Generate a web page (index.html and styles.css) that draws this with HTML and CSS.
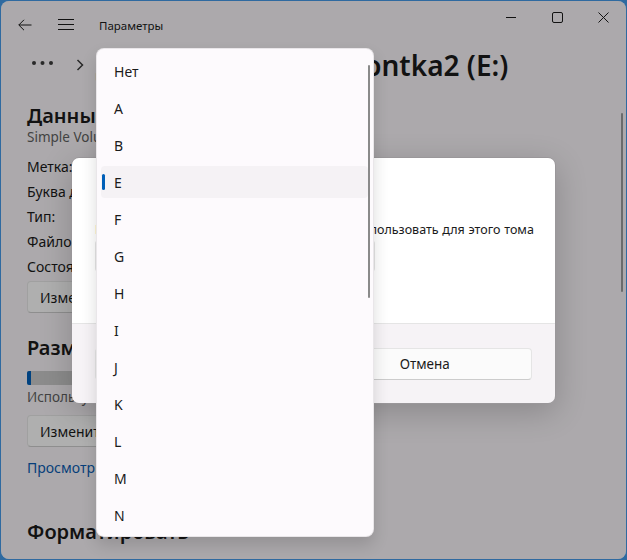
FILE: index.html
```html
<!DOCTYPE html>
<html lang="ru">

<head>
    <meta charset="UTF-8">
    <meta name="viewport" content="width=device-width, initial-scale=1.0">
    <title>Параметры</title>
    <link rel="stylesheet" href="styles.css">
</head>

<body>
    <div class="window">
        <div class="titlebar">
            <button class="nav-btn" aria-label="Назад">
                <svg width="16" height="16" viewBox="0 0 16 16" fill="none" stroke="#1b1b1b" stroke-width="1">
                    <path d="M14.5 8H1.8M7 2.8L1.8 8L7 13.2" />
                </svg>
            </button>
            <button class="nav-btn" aria-label="Меню">
                <svg width="16" height="14" viewBox="0 0 16 14" fill="none" stroke="#1b1b1b" stroke-width="1">
                    <path d="M0 1.5H16M0 6.5H16M0 11.5H16" />
                </svg>
            </button>
            <span class="app-title">Параметры</span>
            <div class="caption">
                <div class="caption-btn">
                    <svg width="10" height="10" viewBox="0 0 10 10" fill="none" stroke="#1b1b1b" stroke-width="1">
                        <path d="M0 5.5H10" />
                    </svg>
                </div>
                <div class="caption-btn">
                    <svg width="11" height="11" viewBox="0 0 11 11" fill="none" stroke="#1b1b1b" stroke-width="1">
                        <rect x="0.5" y="0.5" width="10" height="10" rx="1.5" />
                    </svg>
                </div>
                <div class="caption-btn">
                    <svg width="11" height="11" viewBox="0 0 11 11" fill="none" stroke="#1b1b1b" stroke-width="1">
                        <path d="M0.5 0.5L10.5 10.5M10.5 0.5L0.5 10.5" />
                    </svg>
                </div>
            </div>
        </div>

        <div class="page">
            <div class="breadcrumb">
                <svg class="crumb-more" width="21" height="4" viewBox="0 0 21 4" fill="#3b3b3b">
                    <circle cx="2" cy="2" r="2" />
                    <circle cx="10.5" cy="2" r="2" />
                    <circle cx="19" cy="2" r="2" />
                </svg>
                <svg class="crumb-sep" width="8" height="12" viewBox="0 0 8 12" fill="none" stroke="#3b3b3b" stroke-width="1.5">
                    <path d="M1.5 1L6.5 6L1.5 11" />
                </svg>
                <span class="crumb-prev">Диски и тома</span>
                <svg class="crumb-sep" width="8" height="12" viewBox="0 0 8 12" fill="none" stroke="#3b3b3b" stroke-width="1.5">
                    <path d="M1.5 1L6.5 6L1.5 11" />
                </svg>
                <span class="crumb-current">Remontka2 (E:)</span>
            </div>

            <h2 class="section-title">Данные</h2>
            <div class="subtext">Simple Volume</div>
            <div class="props">
                <span>Метка:</span><span>Remontka2</span>
                <span>Буква диска:</span><span>E</span>
                <span>Тип:</span><span>Простой</span>
                <span>Файловая система:</span><span>NTFS</span>
                <span>Состояние:</span><span>Исправен</span>
            </div>
            <button class="btn btn-first">Изменить метку</button>

            <h2 class="section-title size-title">Размер</h2>
            <div class="bar"><div class="bar-fill" style="width: 4px"></div></div>
            <div class="subtext usage">Используется 42,6 МБ, свободно 14,9 ГБ</div>
            <button class="btn btn-size">Изменить размер</button>
            <a class="link" href="#">Просмотр использования</a>

            <h2 class="section-title format-title">Форматировать</h2>
        </div>

        <div class="page-thumb"></div>

        <div class="smoke"></div>

        <div class="dialog">
            <div class="dialog-body">
                <div class="dialog-title">Изменение буквы диска</div>
                <div class="dialog-text">Выберите букву диска, которую вы хотите использовать для этого тома</div>
                <div class="combo">E</div>
            </div>
            <div class="dialog-footer">
                <button class="btn">ОК</button>
                <button class="btn">Отмена</button>
            </div>
        </div>

        <div class="popup">
            <ul class="options">
                <li>Нет</li>
                <li>A</li>
                <li>B</li>
                <li class="selected">E</li>
                <li>F</li>
                <li>G</li>
                <li>H</li>
                <li>I</li>
                <li>J</li>
                <li>K</li>
                <li>L</li>
                <li>M</li>
                <li>N</li>
                <li>O</li>
                <li>P</li>
                <li>Q</li>
            </ul>
            <div class="popup-thumb"></div>
        </div>
    </div>
</body>

</html>
```

FILE: styles.css
```css
* {
    box-sizing: border-box;
}

body {
    margin: 0;
    background-color: #2f6aa0;
    font-family: "Segoe UI", "Noto Sans", sans-serif;
    color: #1b1b1b;
}

.window {
    position: relative;
    margin: 1px;
    height: 558px;
    border-radius: 8px;
    background-color: #f6f3f6;
    overflow: hidden;
}

/* title bar */
.titlebar {
    display: flex;
    align-items: center;
    height: 48px;
    padding-left: 4px;
}

.nav-btn {
    width: 40px;
    height: 36px;
    display: flex;
    align-items: center;
    justify-content: center;
    border: none;
    background: none;
    padding: 0;
}

.nav-btn + .nav-btn {
    margin-left: 1px;
}

.app-title {
    margin-left: 13px;
    font-size: 11.5px;
}

.caption {
    margin-left: auto;
    align-self: flex-start;
    display: flex;
}

.caption-btn {
    width: 46px;
    height: 32px;
    display: flex;
    align-items: center;
    justify-content: center;
}

/* page */
.page {
    padding: 0 26px;
}

.breadcrumb {
    display: flex;
    align-items: flex-start;
    height: 40px;
    font-size: 28px;
    font-weight: 600;
    line-height: 32px;
    white-space: nowrap;
}

.crumb-more {
    margin: 12px 0 0 5px;
}

.crumb-sep {
    margin: 10px 12px 0 23px;
}

.crumb-prev + .crumb-sep {
    margin: 10px 4px 0 4px;
}

.crumb-prev {
    color: #5f5f5f;
}

.section-title {
    margin: 15px 0 0;
    font-size: 20px;
    font-weight: 600;
    line-height: 24px;
}

.subtext {
    font-size: 13.5px;
    line-height: 18px;
    color: #5f5f5f;
}

.props {
    display: grid;
    grid-template-columns: 150px auto;
    margin-top: 8px;
    font-size: 14px;
    line-height: 25px;
    white-space: nowrap;
}

.btn {
    display: block;
    height: 32px;
    padding: 0 12px;
    border: 1px solid #e5e5e5;
    border-bottom-color: #cccccc;
    border-radius: 4px;
    background-color: #fbfbfb;
    font-family: inherit;
    font-size: 14px;
    color: #1b1b1b;
}

.btn-first {
    margin-top: 2px;
}

.size-title {
    margin-top: 23px;
}

.bar {
    width: 380px;
    height: 14px;
    margin-top: 11px;
    background-color: #c9c9c9;
    border-radius: 2px;
    overflow: hidden;
}

.bar-fill {
    height: 100%;
    background-color: #005fb8;
}

.usage {
    margin-top: 3px;
}

.btn-size {
    margin-top: 9px;
}

.link {
    display: block;
    margin-top: 11px;
    font-size: 14px;
    line-height: 20px;
    color: #0a5bb0;
    text-decoration: none;
}

.format-title {
    margin-top: 42px;
}

.page-thumb {
    position: absolute;
    top: 112px;
    right: 3px;
    width: 2px;
    height: 179px;
    border-radius: 1px;
    background-color: #9a9a9a;
}

/* modal layer */
.smoke {
    position: absolute;
    top: 0;
    left: 0;
    right: 0;
    bottom: 0;
    background-color: rgba(0, 0, 0, 0.3);
}

.dialog {
    position: absolute;
    left: 70px;
    top: 156px;
    width: 485px;
    border: 1px solid rgba(0, 0, 0, 0.1);
    border-radius: 8px;
    overflow: hidden;
    box-shadow: 0 8px 32px rgba(0, 0, 0, 0.2);
}

.dialog-body {
    height: 165px;
    padding: 23px 23px 0;
    background-color: #ffffff;
}

.dialog-title {
    font-size: 20px;
    font-weight: 600;
    line-height: 28px;
}

.dialog-text {
    margin-top: 13px;
    font-size: 12.5px;
    line-height: 16px;
    word-spacing: 0.5px;
    white-space: nowrap;
}

.combo {
    width: 280px;
    height: 32px;
    margin-top: 2px;
    padding: 0 11px;
    border: 1px solid #e5e5e5;
    border-bottom-color: #cccccc;
    border-radius: 4px;
    background-color: #fdfbfd;
    font-size: 14px;
    line-height: 30px;
}

.dialog-footer {
    display: grid;
    grid-template-columns: 1fr 1fr;
    gap: 8px;
    padding: 24px 23px 23px;
    border-top: 1px solid #e5e5e5;
    background-color: #f6f3f6;
}

.dialog-footer .btn {
    width: 100%;
    font-size: 13.5px;
}

/* dropdown */
.popup {
    position: absolute;
    left: 95px;
    top: 47px;
    width: 278px;
    height: 489px;
    padding-top: 6px;
    border: 1px solid rgba(0, 0, 0, 0.08);
    border-radius: 8px;
    background-color: #fdfafd;
    box-shadow: 0 8px 16px rgba(0, 0, 0, 0.14);
    overflow: hidden;
}

.options {
    list-style: none;
    margin: 0;
    padding: 0;
}

.options li {
    position: relative;
    display: flex;
    align-items: center;
    height: 32px;
    margin: 0 5px 5px 4px;
    padding-left: 13px;
    border-radius: 4px;
    font-size: 14px;
}

.options li.selected {
    background-color: #f5f2f5;
}

.options li.selected::before {
    content: "";
    position: absolute;
    left: 1px;
    top: 8px;
    width: 3px;
    height: 16px;
    border-radius: 2px;
    background-color: #005fb8;
}

.popup-thumb {
    position: absolute;
    top: 16px;
    right: 3px;
    width: 2px;
    height: 233px;
    border-radius: 1px;
    background-color: #8a8a8a;
}
```
